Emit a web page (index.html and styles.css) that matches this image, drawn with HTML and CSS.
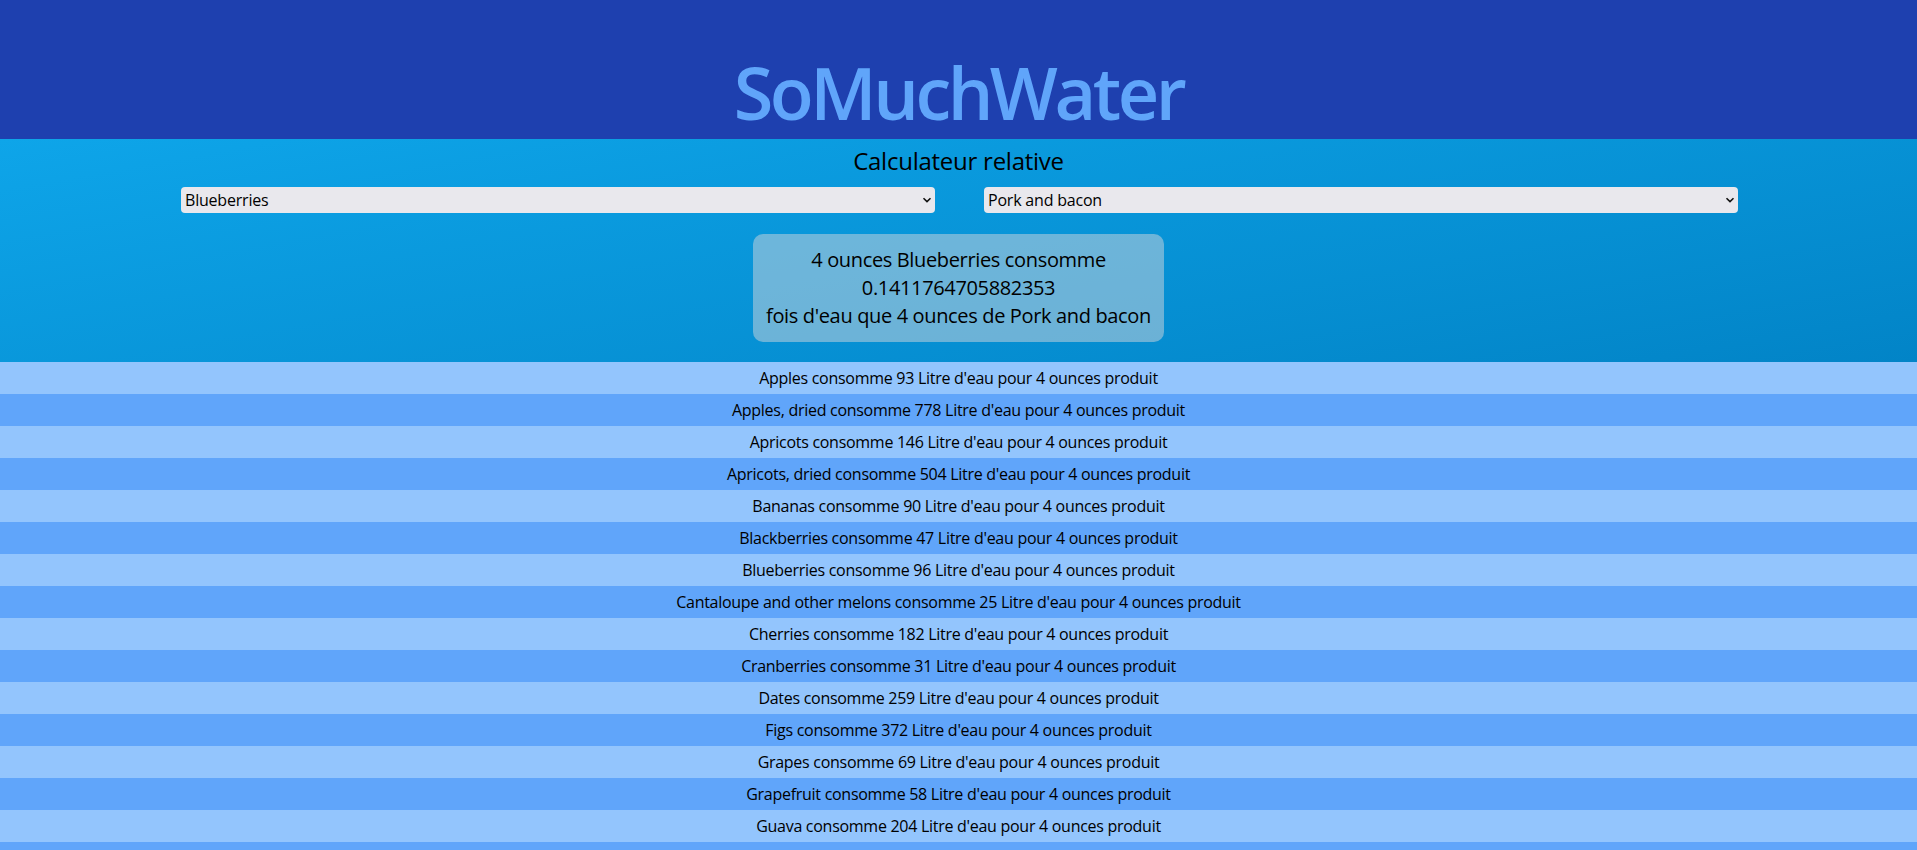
FILE: index.html
```html
<!DOCTYPE html>
<html lang="fr">
<head>
<meta charset="utf-8">
<title>SoMuchWater</title>
<link rel="stylesheet" href="styles.css">
</head>
<body>
<header class="top">
  <h1 class="brand">SoMuchWater</h1>
</header>
<section class="calc">
  <h2 class="calc-title">Calculateur relative</h2>
  <div class="pickers">
    <div class="picker">
      <select class="picker-select">
        <option>Blueberries</option>
      </select>
      <svg class="chev" width="10" height="6" viewBox="0 0 10 6"><path d="M1.5 1.2 L5 4.6 L8.5 1.2" fill="none" stroke="#111" stroke-width="1.6"/></svg>
    </div>
    <div class="picker">
      <select class="picker-select">
        <option>Pork and bacon</option>
      </select>
      <svg class="chev" width="10" height="6" viewBox="0 0 10 6"><path d="M1.5 1.2 L5 4.6 L8.5 1.2" fill="none" stroke="#111" stroke-width="1.6"/></svg>
    </div>
  </div>
  <div class="result">
    <p class="result-line">4 ounces Blueberries consomme</p>
    <p class="result-line">0.1411764705882353</p>
    <p class="result-line">fois d'eau que 4 ounces de Pork and bacon</p>
  </div>
</section>
<ul class="list">
  <li class="row">Apples consomme 93 Litre d'eau pour 4 ounces produit</li>
  <li class="row">Apples, dried consomme 778 Litre d'eau pour 4 ounces produit</li>
  <li class="row">Apricots consomme 146 Litre d'eau pour 4 ounces produit</li>
  <li class="row">Apricots, dried consomme 504 Litre d'eau pour 4 ounces produit</li>
  <li class="row">Bananas consomme 90 Litre d'eau pour 4 ounces produit</li>
  <li class="row">Blackberries consomme 47 Litre d'eau pour 4 ounces produit</li>
  <li class="row">Blueberries consomme 96 Litre d'eau pour 4 ounces produit</li>
  <li class="row">Cantaloupe and other melons consomme 25 Litre d'eau pour 4 ounces produit</li>
  <li class="row">Cherries consomme 182 Litre d'eau pour 4 ounces produit</li>
  <li class="row">Cranberries consomme 31 Litre d'eau pour 4 ounces produit</li>
  <li class="row">Dates consomme 259 Litre d'eau pour 4 ounces produit</li>
  <li class="row">Figs consomme 372 Litre d'eau pour 4 ounces produit</li>
  <li class="row">Grapes consomme 69 Litre d'eau pour 4 ounces produit</li>
  <li class="row">Grapefruit consomme 58 Litre d'eau pour 4 ounces produit</li>
  <li class="row">Guava consomme 204 Litre d'eau pour 4 ounces produit</li>
  <li class="row">Kiwi consomme 145 Litre d'eau pour 4 ounces produit</li>
  <li class="row">Lemons consomme 76 Litre d'eau pour 4 ounces produit</li>
  <li class="row">Mangoes consomme 216 Litre d'eau pour 4 ounces produit</li>
</ul>
</body>
</html>
```

FILE: styles.css
```css
* { box-sizing: border-box; }

body {
  margin: 0;
  font-family: "Open Sans", "Noto Sans", sans-serif;
  color: #000;
}

.top {
  background: #1e40af;
  padding: 56px 0 11px;
  text-align: center;
}

.brand {
  margin: 0;
  font-size: 72px;
  line-height: 72px;
  font-weight: 600;
  letter-spacing: -3.5px;
  color: #60a5fa;
}

.calc {
  background: linear-gradient(170deg, #0ea5e9 0%, #0284c7 100%);
  padding: 6px 0 20px;
  display: flex;
  flex-direction: column;
  align-items: center;
}

.calc-title {
  margin: 0;
  font-size: 24px;
  line-height: 32px;
  font-weight: 400;
  letter-spacing: -0.25px;
}

.pickers {
  margin-top: 10px;
  margin-left: 2px;
  display: flex;
  gap: 49px;
  justify-content: center;
}

.picker {
  position: relative;
  width: 754px;
}

.picker-select {
  appearance: none;
  -webkit-appearance: none;
  display: block;
  width: 100%;
  height: 26px;
  border: none;
  border-radius: 4px;
  background: #e9e8ed;
  color: #000;
  font-family: inherit;
  font-size: 16px;
  letter-spacing: -0.2px;
  padding: 0 4px;
}

.chev {
  position: absolute;
  right: 3px;
  top: 10px;
}

.result {
  margin-top: 21px;
  padding: 12px 13px;
  border-radius: 10px;
  background: rgba(209, 213, 219, 0.5);
  text-align: center;
}

.result-line {
  margin: 0;
  font-size: 20px;
  line-height: 28px;
  letter-spacing: -0.35px;
}

.list {
  list-style: none;
  margin: 0;
  padding: 0;
}

.row {
  height: 32px;
  padding: 4px 0;
  font-size: 16px;
  line-height: 24px;
  letter-spacing: -0.28px;
  text-align: center;
  background: #93c5fd;
}

.row:nth-child(even) {
  background: #60a5fa;
}
```
